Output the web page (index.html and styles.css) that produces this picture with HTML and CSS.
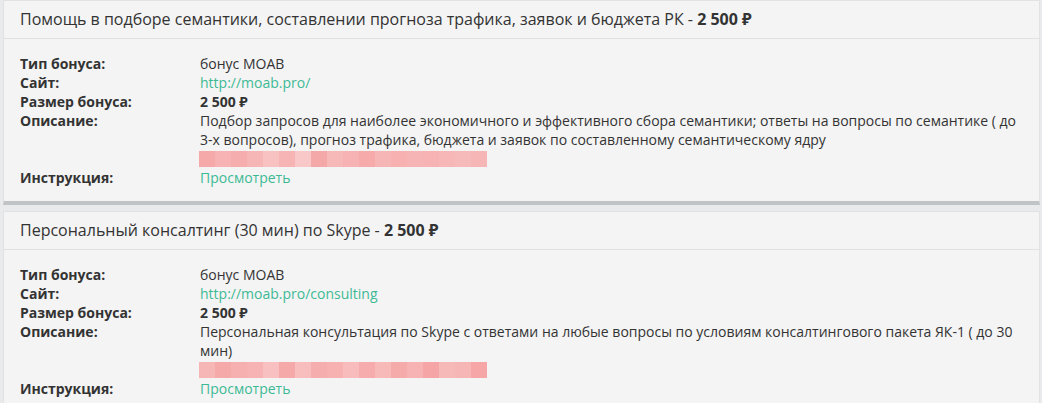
FILE: index.html
```html
<!DOCTYPE html>
<html lang="ru">
<head>
<meta charset="utf-8">
<link rel="stylesheet" href="styles.css">
</head>
<body>
<div class="list">
  <div class="card">
    <div class="card-head">Помощь в подборе семантики, составлении прогноза трафика, заявок и бюджета РК - <b>2 500 ₽</b></div>
    <div class="card-body">
      <div class="label">Тип бонуса:</div><div class="value">бонус MOAB</div>
      <div class="label">Сайт:</div><div class="value"><a class="link" href="#">http://moab.pro/</a></div>
      <div class="label">Размер бонуса:</div><div class="value"><b>2 500 ₽</b></div>
      <div class="label">Описание:</div><div class="value">Подбор запросов для наиболее экономичного и эффективного сбора семантики; ответы на вопросы по семантике ( до 3-х вопросов), прогноз трафика, бюджета и заявок по составленному семантическому ядру<div class="blur"><span style="background:#f6a9a9"></span><span style="background:#f7b3b3"></span><span style="background:#f6adad"></span><span style="background:#f7b6b6"></span><span style="background:#f8c2c2"></span><span style="background:#f7b4b4"></span><span style="background:#f8c8c8"></span><span style="background:#f5a8a8"></span><span style="background:#f7b8b8"></span><span style="background:#f7b3b3"></span><span style="background:#f6aaaa"></span><span style="background:#f7b6b6"></span><span style="background:#f7b1b1"></span><span style="background:#f7b4b4"></span><span style="background:#f7b3b3"></span><span style="background:#f7b7b7"></span><span style="background:#f7baba"></span><span style="background:#f7b6b6"></span></div></div>
      <div class="label">Инструкция:</div><div class="value"><a class="link" href="#">Просмотреть</a></div>
    </div>
  </div>
  <div class="card">
    <div class="card-head">Персональный консалтинг (30 мин) по Skype - <b>2 500 ₽</b></div>
    <div class="card-body">
      <div class="label">Тип бонуса:</div><div class="value">бонус MOAB</div>
      <div class="label">Сайт:</div><div class="value"><a class="link" href="#">http://moab.pro/consulting</a></div>
      <div class="label">Размер бонуса:</div><div class="value"><b>2 500 ₽</b></div>
      <div class="label">Описание:</div><div class="value">Персональная консультация по Skype с ответами на любые вопросы по условиям консалтингового пакета ЯК-1 ( до 30 мин)<div class="blur"><span style="background:#f7b6b6"></span><span style="background:#f6a9a9"></span><span style="background:#f7b0b0"></span><span style="background:#f7b3b3"></span><span style="background:#f8c0c0"></span><span style="background:#f6a9a9"></span><span style="background:#f8bebe"></span><span style="background:#f6adad"></span><span style="background:#f7b1b1"></span><span style="background:#f8bcbc"></span><span style="background:#f6acac"></span><span style="background:#f8b9b9"></span><span style="background:#f6abab"></span><span style="background:#f7b3b3"></span><span style="background:#f5a5a5"></span><span style="background:#f7b8b8"></span><span style="background:#f7b6b6"></span><span style="background:#f6a6a6"></span></div></div>
      <div class="label">Инструкция:</div><div class="value"><a class="link" href="#">Просмотреть</a></div>
    </div>
  </div>
</div>
</body>
</html>
```
FILE: styles.css
```css
* { box-sizing: border-box; }
html, body { margin: 0; padding: 0; }
body {
  background: #e9eaeb;
  font-family: "Open Sans", "Noto Sans", sans-serif;
  color: #333;
  width: 1042px;
  height: 403px;
  overflow: hidden;
}
.list {
  display: flex;
  flex-direction: column;
  gap: 6px;
  padding: 0 2px 0 3px;
}
.card {
  background: #f4f4f4;
  border: 1px solid #e0e2e4;
  border-bottom: 4px solid #c0c4c7;
}
.card-head {
  height: 38px;
  line-height: 37px;
  padding: 0 16px;
  font-size: 16px;
  border-bottom: 1px solid #dfe1e3;
  white-space: nowrap;
}
.card-head b { font-weight: 700; }
.card-body {
  display: grid;
  grid-template-columns: 180px 1fr;
  padding: 15px 20px 14px 16px;
  font-size: 14px;
  line-height: 19px;
}
.label { font-weight: 700; }
.value b { font-weight: 700; }
.link { color: #3dba94; text-decoration: none; }
.blur {
  display: flex;
  width: 288px;
  height: 16px;
  margin: 2px 0 1px -1px;
}
.blur span { flex: 1; }
```
